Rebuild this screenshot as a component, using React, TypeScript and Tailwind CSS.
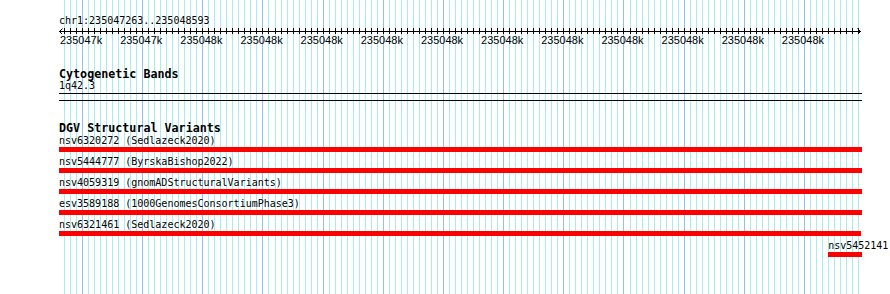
const START = 235047263;
const END = 235048593;
const TRACK_W = 803;

const GRID_ORIGIN = 59.7;
const GRID_SCALE = 0.6017;

const gridX = (bp: number) => Math.round(GRID_ORIGIN + (bp - START) * GRID_SCALE);
const trackX = (bp: number) =>
  Math.min(TRACK_W, Math.max(0, ((bp - START) * TRACK_W) / (END - START)));

const ticks: number[] = [];
for (let bp = 235047270; bp <= 235048590; bp += 10) ticks.push(bp);

const labels = [
  '235047k', '235047k', '235048k', '235048k', '235048k', '235048k', '235048k',
  '235048k', '235048k', '235048k', '235048k', '235048k', '235048k',
];

interface Feature {
  name: string;
  source?: string;
  start: number;
  end: number;
}

const features: Feature[] = [
  { name: 'nsv6320272', source: 'Sedlazeck2020', start: 235046100, end: 235049800 },
  { name: 'nsv5444777', source: 'ByrskaBishop2022', start: 235045900, end: 235050200 },
  { name: 'nsv4059319', source: 'gnomADStructuralVariants', start: 235046800, end: 235049100 },
  { name: 'esv3589188', source: '1000GenomesConsortiumPhase3', start: 235046500, end: 235049400 },
  { name: 'nsv6321461', source: 'Sedlazeck2020', start: 235047000, end: 235048591 },
  { name: 'nsv5452141', start: 235048537, end: 235048900 },
];

function GridLines() {
  return (
    <svg className="absolute inset-0 pointer-events-none" width={890} height={294}>
      {ticks.map((bp) => {
        const x = gridX(bp) + 0.5;
        const major = bp % 100 === 0;
        return (
          <line key={bp} x1={x} x2={x} y1={0} y2={294} stroke={major ? '#8fc3ec' : '#a9ecec'} strokeWidth={1} />
        );
      })}
    </svg>
  );
}

function Ruler() {
  return (
    <svg width={TRACK_W} height={7} className="block">
      <line x1={0} x2={802} y1={4.5} y2={4.5} stroke="#000" strokeWidth={1} />
      {ticks.map((bp) => {
        const x = gridX(bp) - 59 + 0.5;
        return <line key={bp} x1={x} x2={x} y1={1} y2={7} stroke="#000" strokeWidth={1} />;
      })}
      <path d="M3.5 1.5 L0.5 4.5 L3.5 7.5" fill="none" stroke="#000" strokeWidth={1} />
      <path d="M798.5 1.5 L801.5 4.5 L798.5 7.5" fill="none" stroke="#000" strokeWidth={1} />
    </svg>
  );
}

function FeatureRow({ f }: { f: Feature }) {
  const left = trackX(f.start);
  const width = trackX(f.end) - left;
  return (
    <div className="flex flex-col">
      <div className="h-[12px] leading-[12px] whitespace-nowrap" style={{ paddingLeft: left }}>
        {f.name}
        {f.source && ` (${f.source})`}
      </div>
      <div className="h-[5px] bg-[#ff0000]" style={{ marginLeft: left, width }} />
    </div>
  );
}

export default function App() {
  return (
    <div className="relative w-[890px] h-[294px] bg-white overflow-hidden text-black font-['DejaVu_Sans_Mono',monospace] text-[10px]">
      <GridLines />

      <div className="relative pl-[59px] pt-[15px]">
        <div className="w-[803px]">
          {/* overview / ruler */}
          <div className="h-[12px] leading-[12px]">chr1:235047263..235048593</div>
          <Ruler />
          <div className="flex ml-[-8px] font-['Liberation_Sans',Arial,sans-serif] text-[11px] leading-[12px]">
            {labels.map((l, i) => (
              <div key={i} className="w-[60.17px] shrink-0 text-center">
                {l}
              </div>
            ))}
          </div>

          {/* Cytogenetic Bands */}
          <div className="mt-[21px] h-[13px] leading-[15px] font-bold text-[11.7px]">Cytogenetic Bands</div>
          <div className="h-[12px] leading-[12px]">1q42.3</div>
          <div className="mt-[1px] h-px bg-black" />
          <div className="mt-[6px] h-px bg-black" />

          {/* DGV */}
          <div className="mt-[20px] h-[13px] leading-[14px] font-bold text-[11.7px]">DGV Structural Variants</div>
          <div className="mt-[1px] flex flex-col gap-[4px]">
            {features.map((f) => (
              <FeatureRow key={f.name} f={f} />
            ))}
          </div>
        </div>
      </div>
    </div>
  );
}
